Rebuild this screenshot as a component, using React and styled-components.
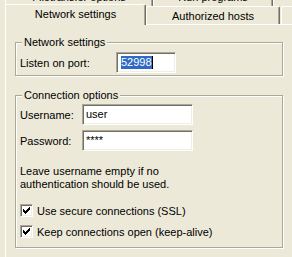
import styled, { createGlobalStyle } from 'styled-components'

const GlobalStyle = createGlobalStyle`
body {
  margin: 0;
  background: #ece9d8;
  font-family: "Liberation Sans", Arial, sans-serif;
  font-size: 11px;
  color: #000;
}
`

const Window = styled.div`
width: 292px;
height: 257px;
box-sizing: border-box;
padding-left: 5px;
overflow: hidden;
`

const TabRow = styled.div`
display: flex;
align-items: flex-start;
height: ${p => (p.$back ? 20 : 18)}px;
margin-top: ${p => (p.$back ? -14 : 0)}px;
`

const Tab = styled.div`
flex: none;
box-sizing: border-box;
width: ${p => p.$w}px;
height: ${p => (p.$back ? 20 : 18)}px;
margin-right: ${p => p.$gap || 0}px;
padding-top: ${p => (p.$back ? 2 : 1)}px;
line-height: ${p => (p.$back ? 17 : 16)}px;
border: 1px solid #fff;
border-bottom: none;
border-right-color: #716f64;
border-radius: 2px 2px 0 0;
box-shadow: inset -1px 0 #aca899;
text-align: center;
white-space: nowrap;
overflow: hidden;
`

const ActiveTab = styled(Tab)`
position: relative;
z-index: 1;
height: 21px;
margin-top: -2px;
margin-bottom: -1px;
padding-top: 0;
line-height: 18px;
background: #ece9d8;
`

const Panel = styled.div`
width: 300px;
height: 240px;
box-sizing: border-box;
border-top: 1px solid #fff;
border-left: 1px solid #fff;
padding: 17px 0 0 9px;
`

const Group = styled.div`
width: 268px;
box-sizing: border-box;
margin-top: ${p => p.$mt}px;
padding: 0 4px ${p => p.$pb}px 4px;
border: 1px solid #aca899;
box-shadow: inset 1px 1px #fff, 1px 1px #fff;
`

const Legend = styled.div`
display: table;
margin: -7px 0 0 2px;
padding: 0 2px;
line-height: 13px;
background: #ece9d8;
`

const Row = styled.div`
display: flex;
align-items: center;
margin-top: ${p => p.$mt}px;
`

const Label = styled.span`
width: ${p => p.$w}px;
flex: none;
`

const TextBox = styled.div`
width: ${p => p.$w}px;
height: 21px;
box-sizing: border-box;
padding: 0 2px 0 3px;
display: flex;
align-items: center;
background: #fff;
border: 1px solid;
border-color: #aca899 #fff #fff #aca899;
box-shadow: inset 1px 1px #716f64, inset -1px -1px #f1efe2;
line-height: 13px;
white-space: nowrap;
overflow: hidden;
`

const Selected = styled.span`
margin-left: 1px;
background: #316ac5;
color: #fff;
line-height: 13px;
`

const Caret = styled.span`
width: 1px;
height: 13px;
background: #000;
`

const Note = styled.p`
margin: 14px 0 0;
line-height: 13px;
`

const CheckRow = styled.label`
display: flex;
align-items: center;
height: 13px;
margin-top: ${p => p.$mt}px;
`

const Box = styled.span`
width: 13px;
height: 13px;
box-sizing: border-box;
display: flex;
align-items: center;
justify-content: center;
margin-right: 4px;
background: #fff;
border: 1px solid;
border-color: #aca899 #fff #fff #aca899;
box-shadow: inset 1px 1px #716f64, inset -1px -1px #f1efe2;
`

const CheckMark = () => (
  <svg width="7" height="7" viewBox="0 0 7 7" shapeRendering="crispEdges">
    <path
      fill="#000"
      d="M6 0h1v1h-1z M5 1h2v1h-2z M0 2h1v1h-1z M4 2h3v1h-3z M0 3h2v1h-2z M3 3h3v1h-3z M0 4h5v1h-5z M1 5h3v1h-3z M2 6h1v1h-1z"
    />
  </svg>
)

const Check = ({ children, mt }) => (
  <CheckRow $mt={mt}>
    <Box>
      <CheckMark />
    </Box>
    {children}
  </CheckRow>
)

const App = () => {
  return (
    <Window>
      <GlobalStyle />
      <TabRow $back>
        <Tab $back $w={148}>Filetransfer options</Tab>
        <Tab $back $w={120}>Run programs</Tab>
        <Tab $back $w={40}>
          <svg width="20" height="17" viewBox="0 0 20 17">
            <rect x="16" y="8" width="1" height="9" fill="#19b8c4" />
          </svg>
        </Tab>
      </TabRow>
      <TabRow>
        <ActiveTab $w={141}>Network settings</ActiveTab>
        <Tab $w={134} $gap={1}>Authorized hosts</Tab>
        <Tab $w={30} />
      </TabRow>
      <Panel>
        <Group $mt={0} $pb={2}>
          <Legend>Network settings</Legend>
          <Row $mt={3}>
            <Label $w={96}>Listen on port:</Label>
            <TextBox $w={60}>
              <Selected>52998</Selected>
              <Caret />
            </TextBox>
          </Row>
        </Group>
        <Group $mt={19} $pb={9}>
          <Legend>Connection options</Legend>
          <Row $mt={2}>
            <Label $w={62}>Username:</Label>
            <TextBox $w={111}>user</TextBox>
          </Row>
          <Row $mt={5}>
            <Label $w={62}>Password:</Label>
            <TextBox $w={111}>****</TextBox>
          </Row>
          <Note>
            Leave username empty if no
            <br />
            authentication should be used.
          </Note>
          <Check mt={13}>Use secure connections (SSL)</Check>
          <Check mt={8}>Keep connections open (keep-alive)</Check>
        </Group>
      </Panel>
    </Window>
  )
}

export default App
